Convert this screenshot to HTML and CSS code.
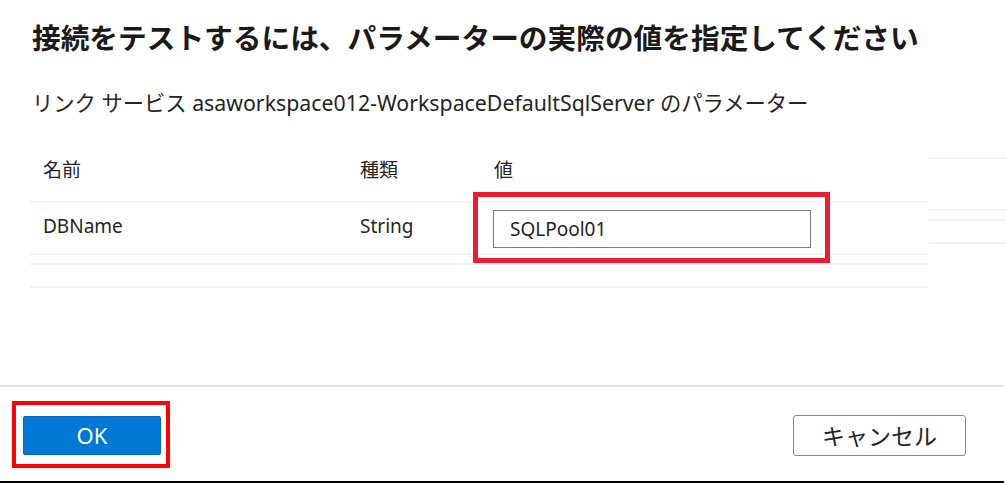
FILE: index.html
```html
<!DOCTYPE html>
<html lang="ja">
<head>
<meta charset="utf-8">
<title>パラメーター</title>
<link rel="stylesheet" href="styles.css">
</head>
<body>
<div class="dialog">
  <div class="content">
    <h1 class="title">接続をテストするには、パラメーターの実際の値を指定してください</h1>
    <p class="subtitle">リンク サービス asaworkspace012-WorkspaceDefaultSqlServer のパラメーター</p>
    <div class="table">
      <div class="row head">
        <span class="cell">名前</span>
        <span class="cell">種類</span>
        <span class="cell">値</span>
      </div>
      <div class="row data">
        <span class="cell text">DBName</span>
        <span class="cell text">String</span>
        <span class="cell">
          <span class="field-wrap">
            <input class="field" type="text" value="SQLPool01">
            <span class="mark mark-field"></span>
          </span>
        </span>
      </div>
      <div class="row spacer1"></div>
      <div class="row spacer2"></div>
    </div>
    <div class="ghost">
      <i class="g g1"></i><i class="g g2"></i><i class="g g3"></i><i class="g g4"></i>
    </div>
  </div>
  <div class="footer">
    <span class="ok-wrap">
      <button class="btn primary">OK</button>
      <span class="mark mark-ok"></span>
    </span>
    <button class="btn secondary">キャンセル</button>
  </div>
</div>
</body>
</html>
```

FILE: styles.css
```css
html, body {
  margin: 0;
  padding: 0;
  background: #ffffff;
}
body {
  width: 1006px;
  height: 483px;
  overflow: hidden;
  font-family: "Noto Sans", "Noto Sans CJK JP", sans-serif;
  color: #252423;
}
.dialog {
  display: flex;
  flex-direction: column;
  height: 483px;
}
.content {
  position: relative;
  height: 385px;
  padding: 18px 0 0 32px;
  box-sizing: border-box;
}
.title {
  margin: 0;
  font-size: 28.7px;
  font-weight: 700;
  line-height: 40px;
  color: #1b1a19;
  white-space: nowrap;
}
.subtitle {
  margin: 31px 0 0;
  font-size: 21.3px;
  line-height: 28px;
  color: #252423;
  white-space: nowrap;
}
.table {
  margin-left: -2px;
  width: 898px;
}
.row {
  display: grid;
  grid-template-columns: 317px 134px 1fr;
  padding-left: 13px;
  border-bottom: 2px solid #f1f1f1;
}
.head {
  padding-top: 41px;
  padding-bottom: 19px;
}
.cell {
  font-size: 19px;
  line-height: 24px;
  color: #252423;
}
.data {
  height: 52px;
  box-sizing: border-box;
}
.data .text {
  padding-top: 11px;
}
.field-wrap {
  position: relative;
  display: inline-block;
  margin-top: 7px;
  margin-left: -1px;
}
.field {
  display: block;
  width: 318px;
  height: 38px;
  box-sizing: border-box;
  border: 1px solid #7a7a7a;
  padding: 0 0 0 16px;
  font-family: "Noto Sans", "Noto Sans CJK JP", sans-serif;
  font-size: 19px;
  color: #252423;
  background: #fff;
}
.mark {
  position: absolute;
  box-sizing: border-box;
  pointer-events: none;
}
.mark-field {
  left: -20px;
  right: -19px;
  top: -18px;
  bottom: -15px;
  border: 5px solid #ec1c35;
}
.spacer1 {
  height: 8px;
}
.spacer2 {
  height: 21px;
}
.ghost {
  position: absolute;
  left: 929px;
  top: 0;
  width: 77px;
  height: 300px;
}
.g {
  position: absolute;
  left: 0;
  right: 0;
  height: 2px;
  background: #f2f2f2;
}
.g1 { top: 157px; }
.g2 { top: 209px; }
.g3 { top: 219px; }
.g4 { top: 242px; }
.footer {
  height: 98px;
  box-sizing: border-box;
  border-top: 2px solid #e1e1e1;
  border-bottom: 2px solid #000;
  width: 1004px;
  display: flex;
  align-items: center;
  justify-content: space-between;
  padding: 2px 38px 0 23px;
}
.ok-wrap {
  position: relative;
  display: inline-block;
}
.btn {
  display: block;
  box-sizing: border-box;
  font-family: "Noto Sans", "Noto Sans CJK JP", sans-serif;
  border-radius: 2px;
  cursor: pointer;
  padding: 0;
}
.primary {
  width: 138px;
  height: 39px;
  background: #0078d4;
  border: 1px solid #0068c0;
  color: #ffffff;
  font-size: 22px;
}
.mark-ok {
  left: -11px;
  right: -9px;
  top: -15px;
  bottom: -13px;
  border: 4px solid #ff0000;
}
.secondary {
  width: 173px;
  height: 41px;
  background: #ffffff;
  border: 1px solid #8a8886;
  border-radius: 3px;
  color: #252423;
  font-size: 23px;
}
```
